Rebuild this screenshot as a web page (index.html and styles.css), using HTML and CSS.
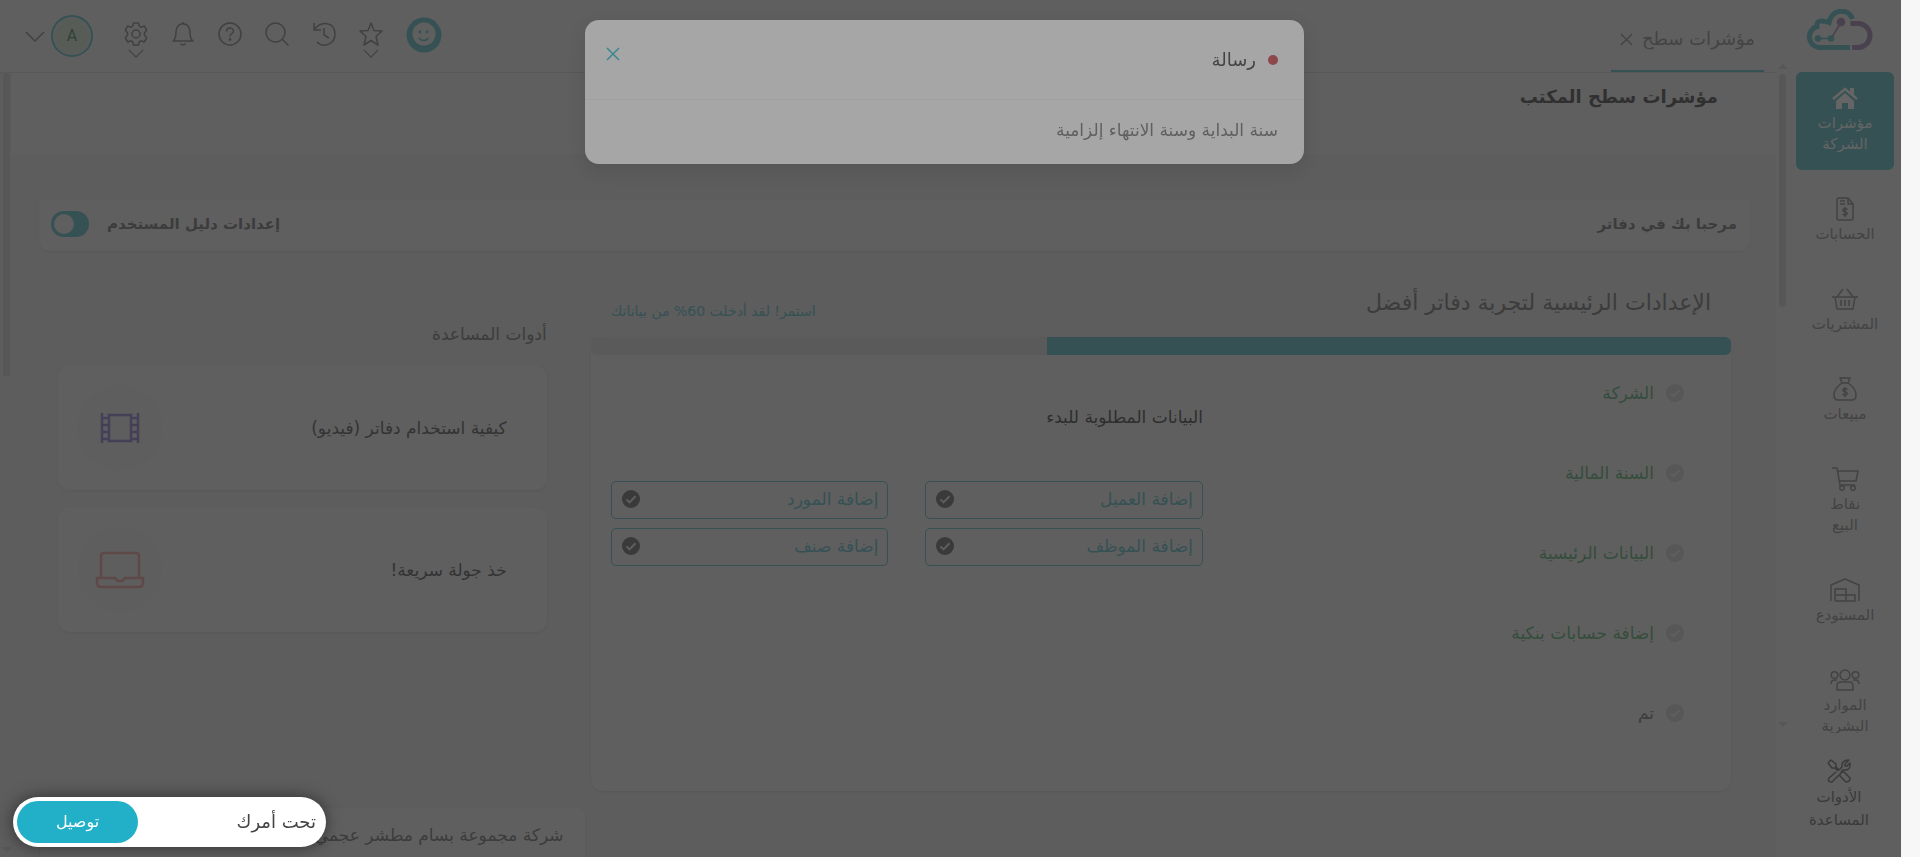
FILE: index.html
```html
<!DOCTYPE html>
<html lang="ar" dir="rtl">
<head>
<meta charset="utf-8">
<title>مؤشرات سطح المكتب</title>
<link rel="stylesheet" href="styles.css">
</head>
<body>
<svg class="defs" aria-hidden="true">
  <symbol id="tick" viewBox="0 0 18 18"><circle cx="9" cy="9" r="9" fill="currentColor"/><path d="M4.5 9.4l3 3 6-6.2" fill="none" stroke="#5f5f5f" stroke-width="2"/></symbol>
  <symbol id="cross" viewBox="0 0 14 14"><path d="M1 1l12 12M13 1L1 13"/></symbol>
  <symbol id="chevron" viewBox="0 0 20 11"><path d="M1 1l9 9 9-9"/></symbol>
</svg>
<div class="app">
  <aside class="sidebar">
    <a class="logo" href="#" aria-label="دفاتر">
      <svg viewBox="0 0 68 42" width="68" height="42" fill="none">
        <path d="M45 38.500H13.500A10.800 10.800 0 0 1 12 17.500Q11 9 24 13.500C27 -1 44 -1 47.500 10" stroke="#355154" stroke-width="5"/>
        <path d="M45.500 14.500H53a12 12 0 0 1 0 24h-6" stroke="#4a414e" stroke-width="5"/>
        <path d="M13 29.500h13" stroke="#355154" stroke-width="1.500"/><path d="M26 29.500l10-16" stroke="#4a414e" stroke-width="1.500"/>
        <circle cx="13" cy="29.500" r="3.300" fill="#355154"/><circle cx="26" cy="29.500" r="3.300" fill="#355154"/><circle cx="36" cy="13" r="4.300" fill="#4a414e"/>
      </svg>
    </a>
    <nav class="menu">
      <a class="item active" href="#"><svg viewBox="0 0 26 22" width="26" height="24"><path d="M1 12L13 2l12 10" fill="none" stroke="currentColor" stroke-width="2.500"/><path d="M18 1h4v8l-4-3zM13 6l9 8v8h-6v-6h-6v6H4v-8z" fill="currentColor"/></svg><span>مؤشرات الشركة</span></a>
      <a class="item" href="#"><svg class="line" viewBox="0 0 18 24" width="18" height="24"><path d="M3 1h9l5 6v14q0 2-2 2H3q-2 0-2-2V3q0-2 2-2zM12 1v6h5M4 4h5M4 7h5M11.500 12.500Q9 10.500 7 12.500c-1 2.500 5 1.500 4 4.500-1 1.500-3 1.500-4.500 0M9 10v10"/></svg><span>الحسابات</span></a>
      <a class="item" href="#"><svg class="line" viewBox="0 0 26 22" width="26" height="24"><path d="M0 9h26M3 9l2 12h16l2-12M5 9l6-8M21 9l-6-8M9 12v6M13 12v6M17 12v6"/></svg><span>المشتريات</span></a>
      <a class="item" href="#"><svg class="line" viewBox="0 0 24 24" width="24" height="24"><path d="M7 1h10l-2 5H9zM9 6C3 10 1 13 1 18q0 5 4 5h14q4 0 4-5c0-5-2-8-8-12M14.500 12.500q-2.500-2-4.500 0c-1 2.500 5 1.500 4 4.500-1 1.500-3 1.500-4.500 0M12 10v10"/></svg><span>مبيعات</span></a>
      <a class="item" href="#"><svg class="line" viewBox="0 0 27 24" width="27" height="24"><path d="M0 1h5l3 17h15M6 4h20l-2 10H8"/><circle cx="10" cy="21" r="2.300"/><circle cx="21" cy="21" r="2.300"/></svg><span>نقاط البيع</span></a>
      <a class="item" href="#"><svg class="line" viewBox="0 0 30 24" width="30" height="24"><path d="M1 23V7l14-6 14 6v16M5 23V11h11v12M5 17h20v6H5"/></svg><span>المستودع</span></a>
      <a class="item" href="#"><svg class="line" viewBox="0 0 30 22" width="30" height="24"><circle cx="15" cy="6" r="5"/><circle cx="4.500" cy="6" r="3.300"/><circle cx="25.500" cy="6" r="3.300"/><path d="M7 21v-4q0-4 4-4h8q4 0 4 4v4zM1 15q0-4 4-4h2M29 15q0-4-4-4h-2"/></svg><span>الموارد البشرية</span></a>
    </nav>
    <a class="item tools" href="#"><svg class="line" viewBox="0 0 24 24" width="24" height="24"><path d="M1 4l3-3 5 4v3l3 3M1 4l4 5h3l3 3M13 15l2-2 2 0 6 6q0 4-4 4l-6-6zM12 11l3-3q-1-7 7-7l-4 4v2h2l3-3q1 8-7 7l-2 2M9 13l-7 6q-2 4 3 4l7-7"/></svg><span>الأدوات المساعدة</span></a>
    <i class="arrow up"></i><i class="thumb side"></i><i class="arrow down"></i>
  </aside>

  <div class="main">
    <header class="topbar">
      <div class="tab"><a href="#">مؤشرات سطح</a><button class="plain" aria-label="إغلاق التبويب"><svg class="line" width="13" height="13"><use href="#cross"/></svg></button></div>
      <div class="actions">
        <button class="plain smile" aria-label="الدعم"><svg viewBox="0 0 36 36" width="36" height="36"><circle cx="18" cy="18" r="17.500" fill="#355154"/><circle cx="18" cy="17" r="11.500" fill="#5f5f5f"/><circle cx="14" cy="15" r="1.400" fill="#355154"/><circle cx="21" cy="15" r="1.400" fill="#355154"/><path d="M12.500 21q5.500 5 10 0" fill="none" stroke="#355154" stroke-width="1.500"/></svg></button>
        <button class="plain icon" aria-label="المفضلة"><svg class="line" viewBox="0 0 24 24" width="24" height="24"><path d="M12 1l3 7.500 8 .5-6 5.500 2 8.500-7-4.500L5 23l2-8.500L1 9l8-.5z"/></svg><svg class="line drop" width="16" height="9"><use href="#chevron"/></svg></button>
        <button class="plain icon" aria-label="السجل"><svg class="line" viewBox="0 0 24 24" width="24" height="24"><path d="M2 1v7h7M2 8C9-2 23 0 23 12c0 11-12 14-18 8M12 6v7l5 3"/></svg></button>
        <button class="plain icon" aria-label="بحث"><svg class="line" viewBox="0 0 24 24" width="24" height="24"><circle cx="10.500" cy="10.500" r="9.500"/><path d="M17 17l6.500 6.500"/></svg></button>
        <button class="plain icon" aria-label="مساعدة"><svg class="line" viewBox="0 0 24 24" width="24" height="24"><circle cx="12" cy="12" r="11"/><path d="M8.500 9.500C8.500 5 15.500 5 15.500 9c0 2.500-3.500 2.500-3.500 5.500"/><circle cx="12" cy="17.500" r=".7"/></svg></button>
        <button class="plain icon" aria-label="التنبيهات"><svg class="line" viewBox="0 0 24 24" width="24" height="24"><path d="M2 19q3-2 3-9c0-11 14-11 14 0q0 7 3 9zM12 0v2M9.500 21.500q2.500 3 5 0"/></svg></button>
        <button class="plain icon" aria-label="الإعدادات"><svg class="line" viewBox="0 0 24 24" width="24" height="24"><circle cx="12" cy="12" r="4"/><path d="M9.500 1h5l.8 3.200 1.700 1L20.200 4l2.500 4.200-2.200 2.500v2.600l2.200 2.500-2.500 4.200-3.200-1.200-1.700 1-.8 3.200h-5l-.8-3.200-1.700-1L3.800 20l-2.500-4.200 2.200-2.500v-2.600L1.300 8.200 3.800 4 7 5.200l1.700-1z"/></svg><svg class="line drop" width="16" height="9"><use href="#chevron"/></svg></button>
        <button class="plain account" aria-label="الحساب"><span class="avatar">A</span><svg class="line" width="20" height="11"><use href="#chevron"/></svg></button>
      </div>
    </header>
    <div class="page">
      <div class="title"><h1>مؤشرات سطح المكتب</h1></div>
      <section class="welcome">
        <h2>مرحبا بك في دفاتر</h2>
        <label class="guide">إعدادات دليل المستخدم<input type="checkbox" role="switch" checked></label>
      </section>
      <div class="columns">
        <section class="setup">
          <div class="setup-head"><h2>الإعدادات الرئيسية لتجربة دفاتر أفضل</h2><p>استمر! لقد أدخلت 60% من بياناتك</p></div>
          <div class="card panel">
            <div class="bar"><div class="fill" style="width:60%"></div></div>
            <div class="panel-body">
              <ul class="steps">
                <li><svg width="18" height="18"><use href="#tick"/></svg><a href="#">الشركة</a></li>
                <li><svg width="18" height="18"><use href="#tick"/></svg><a href="#">السنة المالية</a></li>
                <li><svg width="18" height="18"><use href="#tick"/></svg><a href="#">البيانات الرئيسية</a></li>
                <li><svg width="18" height="18"><use href="#tick"/></svg><a href="#">إضافة حسابات بنكية</a></li>
                <li class="last"><svg width="18" height="18"><use href="#tick"/></svg><a href="#">تم</a></li>
              </ul>
              <div class="required">
                <h3>البيانات المطلوبة للبدء</h3>
                <div class="adds">
                  <button>إضافة العميل<svg width="18" height="18"><use href="#tick"/></svg></button>
                  <button>إضافة المورد<svg width="18" height="18"><use href="#tick"/></svg></button>
                  <button>إضافة الموظف<svg width="18" height="18"><use href="#tick"/></svg></button>
                  <button>إضافة صنف<svg width="18" height="18"><use href="#tick"/></svg></button>
                </div>
              </div>
            </div>
          </div>
        </section>
        <section class="help">
          <h3>أدوات المساعدة</h3>
          <a class="card tool" href="#">كيفية استخدام دفاتر (فيديو)<span class="disc"><svg viewBox="0 0 40 30" width="40" height="30" fill="none" stroke="#454058" stroke-width="2.500"><path d="M9 2h22v26H9zM2 0v30M38 0v30M2 5h7M2 12h7M2 19h7M2 26h7M31 5h7M31 12h7M31 19h7M31 26h7"/></svg></span></a>
          <a class="card tool" href="#">خذ جولة سريعة!<span class="disc"><svg viewBox="0 0 50 38" width="50" height="38" fill="none" stroke="#5f4848" stroke-width="2.500"><path d="M6 27V5q0-3 3-3h32q3 0 3 3v22M2 27h18l3 3h4l3-3h18v5q0 4-4 4H6q-4 0-4-4z"/></svg></span></a>
        </section>
      </div>
      <section class="card company"><h3>شركة مجموعة بسام مطشر عجمي</h3></section>
      <i class="thumb content"></i><i class="arrow down edge"></i>
    </div>
  </div>
</div>

<div class="modal" role="dialog" aria-labelledby="msg">
  <div class="modal-head"><h2 id="msg">رسالة</h2><button class="plain" aria-label="إغلاق"><svg class="line" width="14" height="14"><use href="#cross"/></svg></button></div>
  <p>سنة البداية وسنة الانتهاء إلزامية</p>
</div>
<div class="chat"><span>تحت أمرك</span><button>توصيل</button></div>
</body>
</html>
```
FILE: styles.css
```css
* { box-sizing: border-box; margin: 0; padding: 0; }
body { height: 100vh; overflow: hidden; background: #f7f7f7; color: #3c3c3c; font: 17px/20px "DejaVu Sans", sans-serif; }
a { color: inherit; text-decoration: none; }
button { font: inherit; color: inherit; cursor: pointer; }
h1, h2, h3 { font-weight: normal; font-size: 17px; }
ul { list-style: none; }
svg { display: block; flex: none; }
.defs { position: absolute; width: 0; height: 0; }
.line { fill: none; stroke: currentColor; stroke-width: 1.5; stroke-linejoin: round; }
.plain { background: none; border: 0; }
.app { display: flex; height: 100vh; margin-right: 19px; background: #5f5f5f; }

.sidebar { position: relative; display: flex; flex-direction: column; flex: 0 0 125px; min-width: 0; padding: 0 7px 0 20px; }
.logo { flex: 0 0 72px; padding: 9px 21px 0 0; }
.menu { flex: 1; min-height: 0; overflow: hidden; display: flex; flex-direction: column; gap: 13px; }
.item { display: flex; flex-direction: column; flex: none; align-items: center; gap: 3px; padding: 14px 8px 15px; border-radius: 6px; font-size: 15px; line-height: 21px; text-align: center; color: #434343; }
.item span { max-width: 60px; display: flex; justify-content: center; }
.active { background: #355154; color: #656565; }
.tools { flex-basis: 124px; padding: 26px 20px 0 8px; line-height: 23px; color: #3a3a3a; }
.thumb { position: absolute; width: 7px; border-radius: 4px; background: #575757; }
.side { top: 74px; bottom: 550px; left: 3px; }
.content { top: 0; left: 3px; height: 303px; }
.arrow { position: absolute; left: 2px; border: 5px solid transparent; }
.up { top: 59px; border-bottom-color: #575757; }
.down { top: 722px; border-top-color: #575757; }
.edge { top: 774px; }

.main { flex: 1; min-width: 0; display: flex; flex-direction: column; }
.topbar { display: flex; justify-content: space-between; flex: 0 0 73px; border-bottom: 1px solid #585858; }
.tab { display: flex; align-items: center; gap: 9px; margin-right: 12px; padding: 8px 9px 0; border-bottom: 2px solid #355154; color: #444; font-size: 18px; }
.actions { display: flex; gap: 23px; padding: 0 0 0 25px; align-items: flex-start; color: #414141; }
.smile { padding-top: 17px; }
.icon { display: flex; flex-direction: column; align-items: center; gap: 3px; padding-top: 22px; width: 24px; }
.account { display: flex; align-items: center; gap: 6px; margin: 15px 8px 0 0; }
.avatar { width: 42px; height: 42px; border: 2px solid #355154; border-radius: 50%; background: #575c56; box-shadow: inset 0 0 0 1px #5f5f5f; color: #304236; font: 16px/38px Roboto, sans-serif; }

.page { position: relative; flex: 1; min-height: 0; overflow: hidden; background: #5d5d5d; }
.title { height: 81px; margin-left: 12px; padding: 12px 58px 0 0; background: #5f5f5f; }
.title h1 { font-size: 18px; line-height: 24px; font-weight: bold; color: #303030; }
.welcome { display: flex; justify-content: space-between; align-items: center; height: 51px; margin: 46px 26px 0 39px; padding: 0 13px 4px 12px; border-radius: 0 0 10px 10px; background: #5f5f5f; box-shadow: 0 1px 1px #595959; }
.welcome h2, .guide { font-size: 15px; font-weight: bold; }
.guide { display: flex; align-items: center; gap: 18px; }
.guide input { appearance: none; width: 38px; height: 26px; border-radius: 13px; background: #355154; }
.guide input::after { content: ""; display: block; width: 20px; height: 20px; margin: 3px 15px 0 3px; border-radius: 50%; background: #5f5f5f; }

.columns { display: grid; grid-template-columns: 7fr 3fr; gap: 44px; margin: 0 45px 0 58px; }
.card { background: #5f5f5f; border-radius: 12px; box-shadow: 0 1px 2px #595959; }
.setup-head { display: flex; justify-content: space-between; align-items: center; height: 86px; padding: 17px 20px 0 20px; }
.setup-head h2 { font-size: 22px; line-height: 28px; }
.setup-head p { padding-top: 16px; font-size: 14px; color: #355154; }
.panel { height: 454px; }
.bar { height: 18px; border-radius: 6px; background: #5a5a5a; overflow: hidden; }
.fill { height: 100%; background: #355154; }
.panel-body { display: grid; grid-template-columns: 528px 1fr; }
.steps { display: grid; gap: 60px; padding: 28px 47px 0 0; }
.steps li { display: flex; gap: 12px; align-items: center; color: #354d3b; }
.steps svg { color: #575757; }
.steps .last { color: #3c3c3c; }
.required { padding: 52px 0 0 20px; }
.required h3 { color: #2e2e2e; }
.adds { display: grid; grid-template-columns: 1fr 1fr; gap: 9px 37px; margin-top: 54px; }
.adds button { display: flex; justify-content: space-between; align-items: center; height: 38px; padding: 0 9px 2px 10px; border: 1px solid #355154; border-radius: 5px; background: none; color: #355154; }
.adds svg { color: #3a3a3a; }
.help h3 { padding: 73px 0 21px; }
.tool { display: flex; justify-content: space-between; align-items: center; height: 125px; margin-bottom: 17px; padding: 0 40px 0 20px; color: #333; }
.disc { display: grid; place-items: center; width: 84px; height: 84px; border-radius: 50%; background: #5e5e5e; }
.company { width: calc(31% - 6px); height: 60px; margin: 17px auto 0 40px; padding: 17px 21px; border-radius: 6px; }

.modal { position: fixed; top: 20px; left: 585px; right: 616px; height: 144px; border-radius: 14px; background: #a6a6a6; box-shadow: 0 6px 18px rgba(0, 0, 0, .1); color: #606060; }
.modal-head { display: flex; justify-content: space-between; height: 80px; padding: 27px 26px 0 21px; border-bottom: 1px solid #a0a0a0; }
.modal h2 { display: flex; align-items: center; gap: 12px; height: 26px; font-size: 18px; color: #444; }
.modal h2::before { content: ""; width: 10px; height: 10px; border-radius: 50%; background: #8d484b; }
.modal-head button { align-self: flex-start; color: #3b8791; }
.modal p { padding: 20px 26px; }
.chat { position: fixed; left: 13px; bottom: 10px; display: flex; justify-content: space-between; align-items: center; width: 313px; height: 50px; padding: 4px 10px 4px 4px; border-radius: 25px; background: #fff; box-shadow: 0 0 16px rgba(0, 0, 0, .5); color: #444; font-size: 18px; }
.chat button { width: 121px; height: 42px; border: 0; border-radius: 21px; background: #22b0c8; color: #fff; font-size: 16px; }
```
